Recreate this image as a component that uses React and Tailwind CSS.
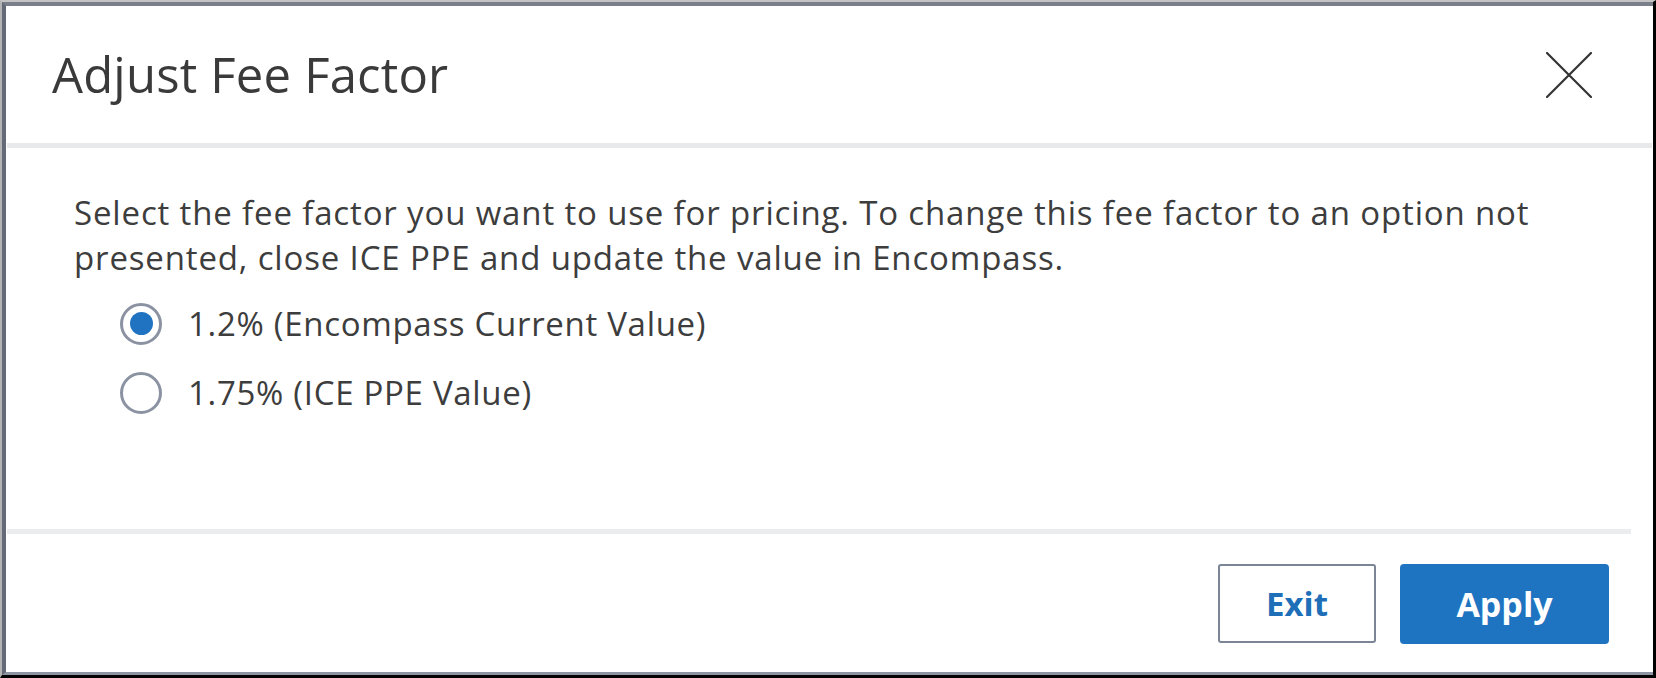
import React from "react";

function Radio({ checked }) {
  return (
    <span className="flex h-[42px] w-[42px] shrink-0 items-center justify-center rounded-full border-[3px] border-[#8b93a3] bg-white">
      {checked ? <span className="h-[23px] w-[23px] rounded-full bg-[#1f73c1]" /> : null}
    </span>
  );
}

export default function App() {
  const font = { fontFamily: "'Open Sans', Lato, 'Liberation Sans', sans-serif" };
  return (
    <div
      className="h-[678px] w-[1656px] border-b-[3px] border-l-2 border-r-[3px] border-t-2 border-b-black border-l-[#b4b4b4] border-r-black border-t-[#c4c4c4]"
      style={font}
    >
      <div className="flex h-full flex-col border-b-[3px] border-l-4 border-t-4 border-b-[#8e95a2] border-l-[#646a76] border-t-[#7a7f89] bg-white">
        {/* Header */}
        <div className="flex h-[137px] items-center justify-between pl-[46px] pr-[61px]">
          <h1 className="text-[49px] font-normal leading-none tracking-[0.2px] text-[#3a3a3a]">Adjust Fee Factor</h1>
          <button className="flex h-[46px] w-[46px] items-center justify-center">
            <svg width="46" height="46" viewBox="0 0 46 46" fill="none">
              <path d="M1 1L45 45M45 1L1 45" stroke="#333" strokeWidth="2.2" strokeLinecap="round" />
            </svg>
          </button>
        </div>
        <div className="ml-px mr-px h-[5px] bg-[#e8e9eb]" />
        {/* Body */}
        <div className="flex-1 pl-[68px] pt-[42px] text-[#3d3d3d]">
          <p className="text-[33px] leading-[45px] tracking-[0.85px]">
            Select the fee factor you want to use for pricing. To change this fee factor to an option not
            <br />
            presented, close ICE PPE and update the value in Encompass.
          </p>
          <div className="mt-[9px] flex flex-col pl-[46px]">
            <label className="flex h-[69px] items-center gap-[26px] text-[33px] tracking-[0.7px]">
              <Radio checked />
              <span>1.2% (Encompass Current Value)</span>
            </label>
            <label className="flex h-[69px] items-center gap-[26px] text-[33px] tracking-[0.7px]">
              <Radio />
              <span>1.75% (ICE PPE Value)</span>
            </label>
          </div>
        </div>
        <div className="ml-px mr-[22px] h-[5px] bg-[#ebecee]" />
        {/* Footer */}
        <div className="flex h-[138px] items-start justify-end gap-[24px] pr-[44px] pt-[30px]">
          <button className="flex h-[79px] w-[158px] items-center justify-center rounded-[3px] border-2 border-[#7c8596] bg-white text-[33px] font-bold text-[#1f6fb8]">
            Exit
          </button>
          <button className="flex h-[80px] w-[209px] items-center justify-center rounded-[4px] bg-[#1f74c1] text-[34px] font-bold text-white">
            Apply
          </button>
        </div>
      </div>
    </div>
  );
}
